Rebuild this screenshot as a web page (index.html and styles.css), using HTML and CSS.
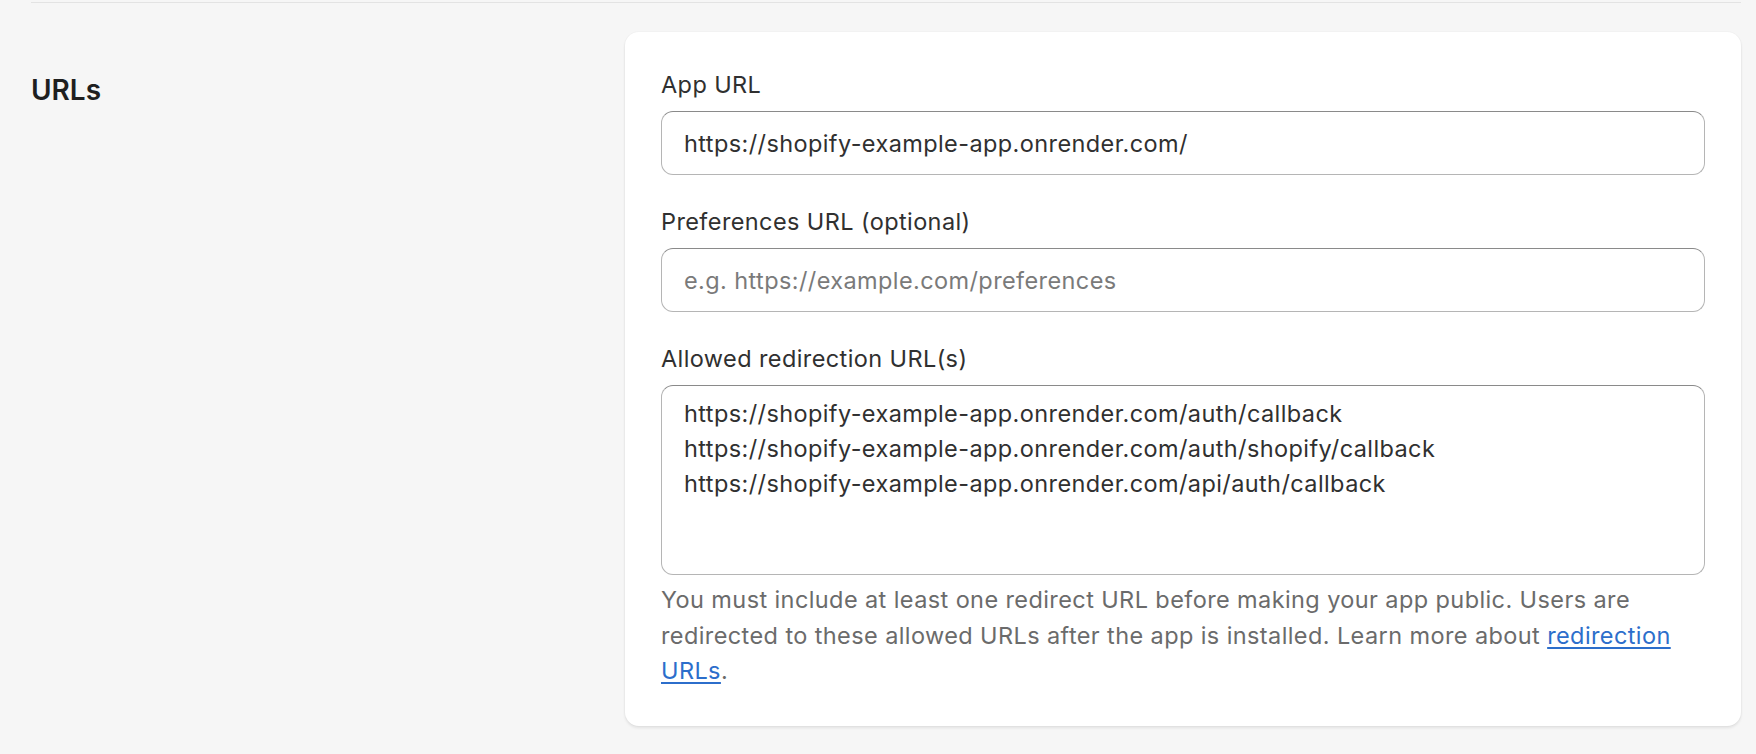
FILE: index.html
```html
<html>

<head>
    <link rel="stylesheet" href="styles.css">
</head>

<body>
    <div class="page">
        <hr class="divider">
        <div class="section">
            <div class="section-title">
                <h2>URLs</h2>
            </div>
            <div class="card">
                <div class="field">
                    <label for="app-url">App URL</label>
                    <input id="app-url" type="text" value="https://shopify-example-app.onrender.com/">
                </div>
                <div class="field">
                    <label for="pref-url">Preferences URL (optional)</label>
                    <input id="pref-url" type="text" placeholder="e.g. https://example.com/preferences">
                </div>
                <div class="field">
                    <label for="redirect-urls">Allowed redirection URL(s)</label>
                    <textarea id="redirect-urls">https://shopify-example-app.onrender.com/auth/callback
https://shopify-example-app.onrender.com/auth/shopify/callback
https://shopify-example-app.onrender.com/api/auth/callback</textarea>
                    <p class="help">You must include at least one redirect URL before making your app public. Users are redirected to these allowed URLs after the app is installed. Learn more about <a href="#">redirection URLs</a>.</p>
                </div>
            </div>
        </div>
    </div>
</body>

</html>
```

FILE: styles.css
```css
body {
    margin: 0;
    background-color: #f6f6f6;
    font-family: Inter, "Noto Sans", sans-serif;
    color: #303030;
}

.page {
    padding: 2px 15px 0 31px;
}

.divider {
    margin: 0;
    border: none;
    border-top: 1px solid #e3e3e3;
}

.section {
    display: flex;
    align-items: flex-start;
    margin-top: 29px;
}

.section-title {
    width: 594px;
    flex-shrink: 0;
    padding-top: 40px;
}

.section-title h2 {
    margin: 0;
    font-size: 28px;
    line-height: 36px;
    font-weight: 600;
    color: #1f1f1f;
}

.card {
    flex: 1;
    background-color: white;
    border-radius: 14px;
    padding: 35px 36px 37px 36px;
    box-shadow: 0 2px 3px rgba(26, 26, 26, 0.09), 0 0 0 1px rgba(26, 26, 26, 0.02);
    display: flex;
    flex-direction: column;
    gap: 29px;
}

.field {
    display: flex;
    flex-direction: column;
}

label,
input,
textarea,
.help {
    font-size: 23.5px;
    letter-spacing: 0.4px;
}

label {
    line-height: 35px;
    margin-bottom: 9px;
}

input,
textarea {
    box-sizing: border-box;
    width: 100%;
    font-family: Inter, "Noto Sans", sans-serif;
    line-height: 35px;
    color: #303030;
    background: white;
    border: 1px solid #b5b5b5;
    border-top-color: #8a8a8a;
    border-radius: 12px;
    padding: 0 22px;
    outline: none;
}

input {
    height: 64px;
}

input::placeholder {
    color: #7a7a7a;
}

textarea {
    height: 190px;
    padding-top: 10px;
    padding-bottom: 10px;
    resize: none;
}

.help {
    margin: 7px 0 0 0;
    line-height: 35.5px;
    color: #6b6b6b;
}

.help a {
    color: #2c6ecb;
    line-height: 1;
    text-decoration: underline;
    text-underline-offset: 3px;
}
```
